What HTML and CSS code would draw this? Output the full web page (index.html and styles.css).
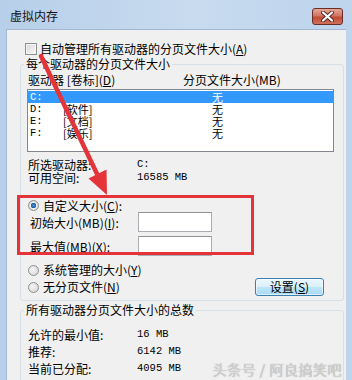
FILE: index.html
```html
<!DOCTYPE html>
<html lang="zh-CN">
<head>
  <meta charset="UTF-8">
  <title>虚拟内存</title>
  <link rel="stylesheet" href="styles.css">
</head>
<body>
  <div class="window">
    <!-- 标题栏 -->
    <div class="titlebar">
      <span class="title">虚拟内存</span>
      <span class="close">
        <svg width="13" height="11" viewBox="0 0 13 11">
          <path d="M2 1.5 L11 9.5 M11 1.5 L2 9.5" stroke="#4a2a24" stroke-width="4" stroke-linecap="round"/>
          <path d="M2 1.5 L11 9.5 M11 1.5 L2 9.5" stroke="#ffffff" stroke-width="2.2" stroke-linecap="round"/>
        </svg>
      </span>
    </div>

    <div class="client">
      <div class="check-row">
        <span class="checkbox"></span>
        <span>自动管理所有驱动器的分页文件大小(<u>A</u>)</span>
      </div>

      <!-- 每个驱动器 -->
      <fieldset class="group group-drives">
        <legend>每个驱动器的分页文件大小</legend>
        <div class="list-head">
          <span class="head-drive">驱动器 [卷标](<u>D</u>)</span>
          <span>分页文件大小(MB)</span>
        </div>
        <div class="listbox">
          <div class="row selected"><span class="c-drive mono">C:</span><span class="c-label"></span><span>无</span></div>
          <div class="row"><span class="c-drive mono">D:</span><span class="c-label">[软件]</span><span>无</span></div>
          <div class="row"><span class="c-drive mono">E:</span><span class="c-label">[文档]</span><span>无</span></div>
          <div class="row"><span class="c-drive mono">F:</span><span class="c-label">[娱乐]</span><span>无</span></div>
        </div>

        <div class="info">
          <div class="info-row"><span class="info-label">所选驱动器:</span><span class="mono">C:</span></div>
          <div class="info-row"><span class="info-label">可用空间:</span><span class="mono">16585 MB</span></div>
        </div>

        <div class="custom">
          <div class="radio-row">
            <span class="radio checked"></span>
            <span>自定义大小(<u>C</u>):</span>
          </div>
          <div class="size-row">
            <span class="size-label">初始大小(MB)(<u>I</u>):</span>
            <span class="textbox"></span>
          </div>
          <div class="size-row size-max">
            <span class="size-label">最大值(MB)(<u>X</u>):</span>
            <span class="textbox"></span>
          </div>
        </div>

        <div class="options">
          <div class="radio-row">
            <span class="radio"></span>
            <span>系统管理的大小(<u>Y</u>)</span>
          </div>
          <div class="radio-row radio-last">
            <span class="radio"></span>
            <span class="grow">无分页文件(<u>N</u>)</span>
            <button class="btn">设置(<u>S</u>)</button>
          </div>
        </div>
      </fieldset>

      <!-- 总数 -->
      <fieldset class="group group-total">
        <legend>所有驱动器分页文件大小的总数</legend>
        <div class="totals">
          <div class="info-row"><span class="info-label">允许的最小值:</span><span class="mono">16 MB</span></div>
          <div class="info-row"><span class="info-label">推荐:</span><span class="mono">6142 MB</span></div>
          <div class="info-row"><span class="info-label">当前已分配:</span><span class="mono">4095 MB</span></div>
        </div>
      </fieldset>
    </div>

    <!-- 红色标注 -->
    <svg class="annot" width="352" height="380" viewBox="0 0 352 380">
      <rect x="18.5" y="196.5" width="234" height="57" fill="none" stroke="#e5333a" stroke-width="3"/>
      <line x1="41" y1="56" x2="98" y2="176" stroke="#e5333a" stroke-width="4.5" stroke-linecap="round"/>
      <polygon points="107,195 106.5,169.5 88.5,178.5" fill="#e5333a"/>
    </svg>

    <div class="watermark">头条号 / 阿良搞笑吧</div>
  </div>
</body>
</html>
```

FILE: styles.css
```css
/* 基本 */
body {
  margin: 0;
  font-family: "Noto Sans CJK SC", sans-serif;
  font-size: 12px;
  color: #000;
}

u {
  text-decoration: underline;
}

.mono {
  font-family: "Liberation Mono", "Noto Sans CJK SC", monospace;
  font-size: 10.5px;
}

.window {
  position: relative;
  width: 352px;
  height: 380px;
  overflow: hidden;
  background: linear-gradient(90deg, #b7cfe9, #c8dbef 55%, #bdd4ec);
}

/* 标题栏 */
.titlebar {
  height: 29px;
  box-sizing: border-box;
  padding: 3px 9px 0 10px;
  display: flex;
  align-items: center;
  justify-content: space-between;
}

.title {
  line-height: 14px;
  color: #111;
}

.close {
  width: 31px;
  height: 17px;
  box-sizing: border-box;
  border: 1px solid #6b2e27;
  border-radius: 3px;
  background: linear-gradient(#e8a797, #d27461 45%, #c24a33 55%, #d0705a);
  display: flex;
  align-items: center;
  justify-content: center;
}

/* 客户区 */
.client {
  margin-left: 6px;
  width: 340px;
  height: 351px;
  box-sizing: border-box;
  border-left: 1px solid #a3b8d0;
  border-top: 1px solid #a3b8d0;
  background: #f0f0f0;
  padding-top: 12px;
}

.check-row {
  display: flex;
  align-items: center;
  gap: 3px;
  height: 14px;
  line-height: 14px;
  margin-left: 18px;
}

.checkbox {
  width: 12px;
  height: 12px;
  box-sizing: border-box;
  border: 1px solid #8e8f8f;
  background: linear-gradient(135deg, #d8d8d8, #f8f8f8);
  box-shadow: inset 0 0 0 1px #f4f4f4;
}

/* 分组框 */
.group {
  margin: 1px 0 0 13px;
  width: 324px;
  box-sizing: border-box;
  padding: 0 0 6px 0;
  border: 1px solid #d5dfe5;
  border-radius: 3px;
  min-inline-size: 0;
}

.group legend {
  padding: 0 2px;
  margin-left: 3px;
  line-height: 14px;
  height: 14px;
}

.list-head {
  display: flex;
  margin-top: 2px;
  padding-left: 7px;
  line-height: 14px;
}

.head-drive {
  width: 155px;
}

.listbox {
  margin: 2px 0 0 6px;
  width: 307px;
  height: 63px;
  box-sizing: border-box;
  border: 1px solid #828790;
  background: #fff;
  padding-top: 1px;
}

.row {
  display: flex;
  align-items: center;
  height: 12px;
  line-height: 12px;
  padding-left: 2px;
  font-size: 11px;
}

.row.selected {
  background: #3399ff;
  color: #fff;
}

.c-drive {
  width: 33px;
}

.c-label {
  width: 149px;
}

.info {
  margin-top: 6px;
}

.info-row {
  display: flex;
  align-items: center;
  padding-left: 7px;
  height: 13px;
  line-height: 13px;
}

.info-label {
  width: 109px;
}

/* 自定义大小 */
.custom {
  margin-top: 15px;
}

.radio-row {
  display: flex;
  align-items: center;
  gap: 4px;
  padding-left: 7px;
  height: 13px;
  line-height: 13px;
}

.radio {
  width: 11px;
  height: 11px;
  box-sizing: border-box;
  border-radius: 50%;
  border: 1px solid #8e8f8f;
  background: radial-gradient(circle at 40% 40%, #f6f6f6, #d0d0d0);
}

.radio.checked {
  background: radial-gradient(circle, #4a9be0 0, #1c5a9c 2.5px, #f3f3f3 3px, #cfcfcf 5px);
}

.size-row {
  display: flex;
  align-items: center;
  height: 20px;
  padding-left: 9px;
}

.size-max {
  margin-top: 4px;
}

.size-label {
  width: 108px;
}

.textbox {
  width: 74px;
  height: 20px;
  box-sizing: border-box;
  border: 1px solid #abadb3;
  border-top-color: #8f9398;
  background: #fff;
}

.options {
  margin-top: 7px;
}

.options .radio-row {
  height: 14px;
  line-height: 14px;
}

.radio-last {
  margin-top: 3px;
}

.grow {
  flex: 1;
}

.btn {
  width: 69px;
  height: 18px;
  margin-right: 19px;
  padding: 0;
  font: inherit;
  line-height: 16px;
  color: #000;
  border: 1px solid #3c7fb1;
  border-radius: 3px;
  background: linear-gradient(#eaf6fd, #d9f0fc 50%, #bee6fd 50%, #a7d9f5);
  box-shadow: inset 0 0 0 1px rgba(255, 255, 255, 0.6);
}

/* 总数 */
.group-total {
  margin-top: 2px;
  padding-bottom: 30px;
}

.totals {
  margin-top: 9px;
}

.totals .info-row {
  height: 17px;
  line-height: 17px;
}

/* 标注与水印 */
.annot {
  position: absolute;
  left: 0;
  top: 0;
  pointer-events: none;
}

.watermark {
  position: absolute;
  right: 10px;
  top: 360px;
  font-size: 14px;
  line-height: 18px;
  color: #d2d2d2;
  text-shadow: 0 0 1px #9a9a9a;
  letter-spacing: 0.5px;
}
```
